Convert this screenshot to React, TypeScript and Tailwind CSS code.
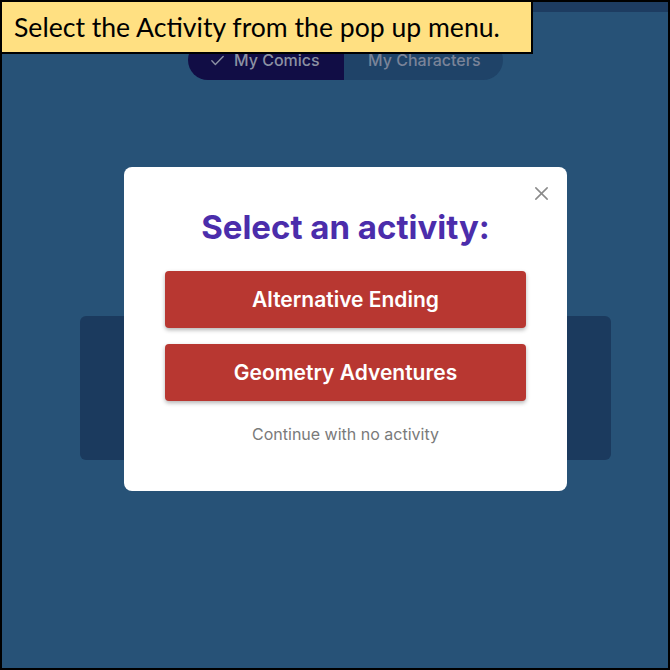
import React from 'react';

const poppins = { fontFamily: 'Inter, "Open Sans", sans-serif' };

const CheckIcon: React.FC<{ className?: string }> = ({ className }) => (
  <svg className={className} viewBox="0 0 24 24" fill="none" stroke="currentColor" strokeWidth="2" strokeLinecap="round" strokeLinejoin="round">
    <path d="M4 12.5l5 5L20 6.5" />
  </svg>
);

const CloseIcon: React.FC<{ className?: string }> = ({ className }) => (
  <svg className={className} viewBox="0 0 24 24" fill="none" stroke="currentColor" strokeWidth="2.2" strokeLinecap="round">
    <path d="M4 4l16 16M20 4L4 20" />
  </svg>
);

const ActivityButton: React.FC<{ label: string }> = ({ label }) => (
  <button className="w-full h-[57px] rounded-[4px] bg-[#b83731] text-white text-[21px] font-semibold shadow-[0_2px_4px_rgba(0,0,0,0.3)]">
    {label}
  </button>
);

export default function App() {
  return (
    <div className="relative w-[670px] h-[670px] overflow-hidden border-2 border-black bg-[#275277]" style={poppins}>
      {/* page behind the modal */}
      <div className="h-[10px] bg-[#1d3c61]" />
      <div className="flex justify-center pt-[28px] pl-[21px]">
        <div className="flex h-[40px] rounded-[20px] overflow-hidden text-[16px] font-medium text-[#8c91a3]">
          <div className="flex items-center gap-2 w-[156px] pl-[21px] bg-[#110d45]">
            <CheckIcon className="w-[17px] h-[17px]" />
            <span>My Comics</span>
          </div>
          <div className="flex items-center w-[159px] pl-[24px] bg-[#1f4368] text-[#7a8499]">My Characters</div>
        </div>
      </div>
      <div className="mt-[236px] ml-[78px] w-[531px] h-[144px] rounded-[6px] bg-[#1b3a5e]" />

      {/* activity modal */}
      <div className="absolute left-[122px] top-[165px] w-[443px] h-[324px] rounded-[8px] bg-white flex flex-col items-center px-[41px] pt-[40px]">
        <button className="absolute right-[17px] top-[18px] text-[#8a8a8a]">
          <CloseIcon className="w-[17px] h-[17px]" />
        </button>
        <h2 className="text-[33px] font-bold text-[#4b2dab] leading-[40px]">Select an activity:</h2>
        <div className="w-full flex flex-col gap-[16px] mt-[24px]">
          <ActivityButton label="Alternative Ending" />
          <ActivityButton label="Geometry Adventures" />
        </div>
        <button className="mt-[21px] text-[16px] text-[#7a7a7a]">Continue with no activity</button>
      </div>

      {/* caption */}
      <div className="absolute -left-[2px] -top-[2px] w-[533px] h-[54px] border-2 border-black bg-[#ffe082] flex items-center pl-[12px]">
        <span className="text-[26.6px] text-black leading-none" style={{ fontFamily: 'Lato, "Open Sans", sans-serif' }}>
          Select the Activity from the pop up menu.
        </span>
      </div>
    </div>
  );
}
